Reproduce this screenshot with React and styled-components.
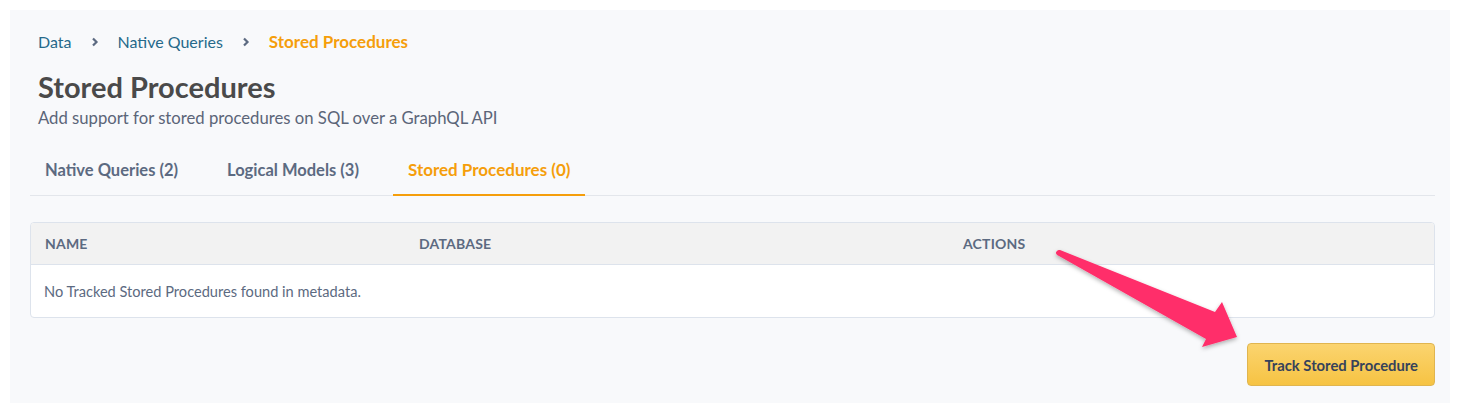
import React from 'react';
import styled, { createGlobalStyle } from 'styled-components';

const GlobalStyle = createGlobalStyle`
  body {
    margin: 0;
    background: #ffffff;
    font-family: Lato, "Open Sans", sans-serif;
  }
`;

const Page = styled.div`
  padding: 10px;
  width: 1460px;
  height: 414px;
  box-sizing: border-box;
`;

const Panel = styled.div`
  position: relative;
  background-color: #f8f9fb;
  height: 393px;
  padding: 22px 15px 0 20px;
  box-sizing: border-box;
`;

const Header = styled.div`
  padding-left: 8px;
`;

const Breadcrumb = styled.nav`
  display: flex;
  align-items: center;
  gap: 18px;
  font-size: 16px;
  line-height: 20px;
  height: 20px;
`;

const Crumb = styled.span`
  color: ${(p) => (p.active ? '#f59e0b' : '#26698a')};
  font-weight: ${(p) => (p.active ? 700 : 400)};
  font-size: ${(p) => (p.active ? '17px' : '16px')};
`;

const Chevron = styled.svg`
  width: 10px;
  height: 10px;
`;

const Title = styled.h1`
  margin: 18px 0 0;
  font-size: 29px;
  line-height: 34px;
  font-weight: 700;
  color: #4a4a4a;
`;

const Subtitle = styled.p`
  margin: 3px 0 0;
  font-size: 16.7px;
  line-height: 22px;
  color: #5b6578;
`;

const Tabs = styled.div`
  display: flex;
  gap: 19px;
  margin-top: 31px;
  border-bottom: 1px solid #e3e6eb;
`;

const Tab = styled.div`
  padding: 0 15px;
  height: 36px;
  line-height: 20px;
  box-sizing: border-box;
  font-size: ${(p) => (p.active ? '17px' : '16.5px')};
  font-weight: 700;
  color: ${(p) => (p.active ? '#f59e0b' : '#5c6a81')};
  border-bottom: 2px solid ${(p) => (p.active ? '#f59e0b' : 'transparent')};
  margin-bottom: -1px;
`;

const Table = styled.div`
  margin-top: 26px;
  border: 1px solid #dde3ec;
  border-radius: 4px;
  background: #ffffff;
  overflow: hidden;
`;

const HeadRow = styled.div`
  display: grid;
  grid-template-columns: 374px 544px 1fr;
  background: #f2f2f2;
  border-bottom: 1px solid #dde3ec;
  height: 41px;
  align-items: center;
`;

const HeadCell = styled.div`
  padding-left: 14px;
  font-size: 14px;
  font-weight: 700;
  letter-spacing: 0.2px;
  text-transform: uppercase;
  color: #5c6a81;
`;

const EmptyRow = styled.div`
  height: 52px;
  display: flex;
  align-items: center;
  padding-left: 13px;
  font-size: 14.6px;
  color: #5c6a81;
`;

const Footer = styled.div`
  display: flex;
  justify-content: flex-end;
  margin-top: 25px;
`;

const Button = styled.button`
  height: 43px;
  padding: 0 16px;
  border: 1px solid #e0b54f;
  border-radius: 4px;
  background: linear-gradient(#fbd46f, #f6c343);
  font-family: inherit;
  font-size: 14.8px;
  font-weight: 700;
  color: #36425a;
  cursor: pointer;
`;

const Arrow = styled.svg`
  position: absolute;
  left: 1030px;
  top: 230px;
  width: 230px;
  height: 140px;
  overflow: visible;
`;

const ChevronIcon = () => (
  <Chevron viewBox="0 0 10 10">
    <path d="M3 1.5 L6.5 5 L3 8.5" fill="none" stroke="#5c6a81" strokeWidth="2.2" />
  </Chevron>
);

const App = () => (
  <>
    <GlobalStyle />
    <Page>
      <Panel>
        <Header>
          <Breadcrumb>
            <Crumb>Data</Crumb>
            <ChevronIcon />
            <Crumb>Native Queries</Crumb>
            <ChevronIcon />
            <Crumb active>Stored Procedures</Crumb>
          </Breadcrumb>
          <Title>Stored Procedures</Title>
          <Subtitle>Add support for stored procedures on SQL over a GraphQL API</Subtitle>
        </Header>
        <Tabs>
          <Tab>Native Queries (2)</Tab>
          <Tab>Logical Models (3)</Tab>
          <Tab active>Stored Procedures (0)</Tab>
        </Tabs>
        <Table>
          <HeadRow>
            <HeadCell>Name</HeadCell>
            <HeadCell>Database</HeadCell>
            <HeadCell>Actions</HeadCell>
          </HeadRow>
          <EmptyRow>No Tracked Stored Procedures found in metadata.</EmptyRow>
        </Table>
        <Footer>
          <Button>Track Stored Procedure</Button>
        </Footer>
        <Arrow viewBox="1030 230 230 140">
          <defs>
            <filter id="arrowShadow" x="-20%" y="-20%" width="140%" height="140%">
              <feDropShadow dx="0" dy="2" stdDeviation="2" floodColor="#000" floodOpacity="0.3" />
            </filter>
          </defs>
          <path
            d="M1057 251 Q1054 254 1059 256 L1206 339 L1202 347 L1237 337 L1222 302 L1215 312 L1060 250 Q1058 249.5 1057 251 Z"
            fill="#ff2d6a"
            filter="url(#arrowShadow)"
            transform="translate(-10 -10)"
          />
        </Arrow>
      </Panel>
    </Page>
  </>
);

export default App;
